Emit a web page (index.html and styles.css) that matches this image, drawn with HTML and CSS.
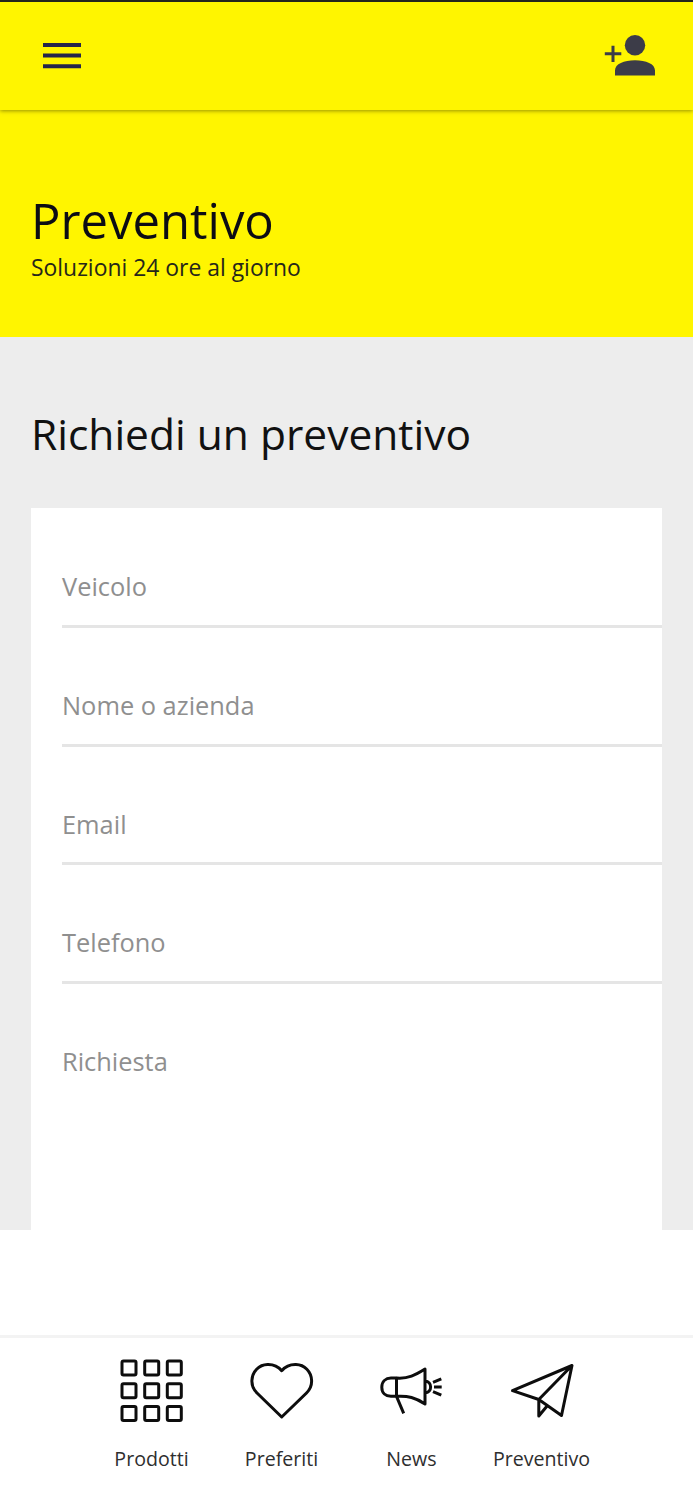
FILE: index.html
```html
<!DOCTYPE html>
<html lang="it">
<head>
<meta charset="utf-8">
<title>Preventivo</title>
<link rel="stylesheet" href="styles.css">
</head>
<body>
<div class="app">
  <header class="topbar">
    <svg class="menu-icon" viewBox="0 0 40 28" aria-label="Menu"><path d="M1 3h38M1 13.600h38M1 24.300h38"/></svg>
    <svg class="user-icon" viewBox="0 0 52 42" aria-label="Aggiungi utente">
      <circle cx="31" cy="11.200" r="10.200"/>
      <path d="M11 41.400v-5c0-6.500 9-10.200 20-10.200s20 3.700 20 10.200v5zM7.500 11.700h3v6.600h6.800v3h-6.800v6.800h-3v-6.800H.8v-3h6.700z"/>
    </svg>
  </header>
  <section class="hero">
    <h1 class="hero-title">Preventivo</h1>
    <p class="hero-sub">Soluzioni 24 ore al giorno</p>
  </section>
  <main class="content">
    <h2 class="heading">Richiedi un preventivo</h2>
    <form class="card">
      <div class="field"><label>Veicolo</label></div>
      <div class="field"><label>Nome o azienda</label></div>
      <div class="field"><label>Email</label></div>
      <div class="field"><label>Telefono</label></div>
      <div class="field field-last"><label>Richiesta</label></div>
    </form>
  </main>
  <nav class="tabs">
    <a class="tab">
      <svg class="tab-icon" viewBox="0 0 66 66">
        <g><rect x="3" y="3" width="14" height="14" rx="1.500"/><rect x="25.700" y="3" width="14" height="14" rx="1.500"/><rect x="48.300" y="3" width="14" height="14" rx="1.500"/>
        <rect x="3" y="25.700" width="14" height="14" rx="1.500"/><rect x="25.700" y="25.700" width="14" height="14" rx="1.500"/><rect x="48.300" y="25.700" width="14" height="14" rx="1.500"/>
        <rect x="3" y="48.400" width="14" height="14" rx="1.500"/><rect x="25.700" y="48.400" width="14" height="14" rx="1.500"/><rect x="48.300" y="48.400" width="14" height="14" rx="1.500"/></g>
      </svg>
      <span>Prodotti</span>
    </a>
    <a class="tab">
      <svg class="tab-icon" viewBox="0 0 66 66"><path d="M32.700 59 8 35C4 31 2.700 27 2.900 22.500 3.200 13.500 10 6.700 18.500 6.500c6-.2 11 2.300 14.200 6.200C36 8.800 41 6.300 47 6.500c8.500.2 15.300 7 15.600 16 .2 4.500-1.100 8.500-5.100 12.500z"/></svg>
      <span>Preferiti</span>
    </a>
    <a class="tab">
      <svg class="tab-icon" viewBox="0 0 66 66"><path d="M17.500 20H12c-5.300 0-9.200 3.500-9.200 9.200S6.700 38.300 12 38.300h5.500zM17.500 20C29 21 36.500 17 46 11v35C36.500 39.500 29 37.600 17.500 38.300M17.500 38.300l7.200 17M46 23c7.500.5 7.500 11.700 0 11.700M54 24.300l8.300-3.500M55 29h7.700M54 33.600l8.300 3.500"/></svg>
      <span>News</span>
    </a>
    <a class="tab">
      <svg class="tab-icon" viewBox="0 0 66 66"><path d="M3.500 32.700 63 7.500l-10.500 50L29.800 41.500zM63 7.500 29.800 41.500V58l8.700-10.500"/></svg>
      <span>Preventivo</span>
    </a>
  </nav>
</div>
</body>
</html>
```
FILE: styles.css
```css
* { box-sizing: border-box; }
body {
  margin: 0;
  background: #fff;
  color: #0c0c14;
  font-family: "Open Sans", sans-serif;
}
.app { display: flex; flex-direction: column; height: 1500px; overflow: hidden; }
.topbar {
  position: relative;
  z-index: 1;
  display: flex;
  justify-content: space-between;
  flex: none;
  height: 110px;
  padding: 32px 37px 0 42px;
  border-top: 2px solid #24241c;
  background: #fff500;
  box-shadow: 0 1px 4px rgba(70, 65, 0, .55);
}
.menu-icon { width: 40px; height: 28px; margin-top: 8px; fill: none; stroke: #25254a; stroke-width: 4; }
.user-icon { width: 52px; height: 42px; fill: #3c3c48; }
.hero { flex: none; height: 227px; padding: 80px 32px 0 31px; background: #fff500; }
.hero-title { margin: 0; font-size: 49px; line-height: 60px; font-weight: 400; white-space: nowrap; }
.hero-sub { margin: 3px 0 0; font-size: 22.9px; line-height: 30px; color: #26261a; white-space: nowrap; }
.content { flex: none; height: 893px; padding: 67px 31px 0; background: #ededed; }
.heading { margin: 0 0 44px; font-size: 42.5px; line-height: 60px; font-weight: 400; color: #111; white-space: nowrap; }
.card { height: 722px; padding: 1px 0 0 31px; background: #fff; }
.field { height: 118.75px; padding-top: 59px; border-bottom: 3px solid #e5e5e5; color: #8f8f8f; font-size: 25.4px; line-height: 36px; }
.field-last { border-bottom: 0; }
.tabs {
  display: flex;
  flex: none;
  justify-content: center;
  height: 165px;
  margin-top: 105px;
  padding-top: 20px;
  border-top: 3px solid #f3f3f3;
}
.tab { display: flex; flex-direction: column; align-items: center; width: 130px; font-size: 19.6px; line-height: 28px; color: #2e2e2e; }
.tab-icon { width: 66px; height: 66px; margin-bottom: 21px; fill: none; stroke: #0d0d0d; stroke-width: 3; stroke-linejoin: round; }
```
